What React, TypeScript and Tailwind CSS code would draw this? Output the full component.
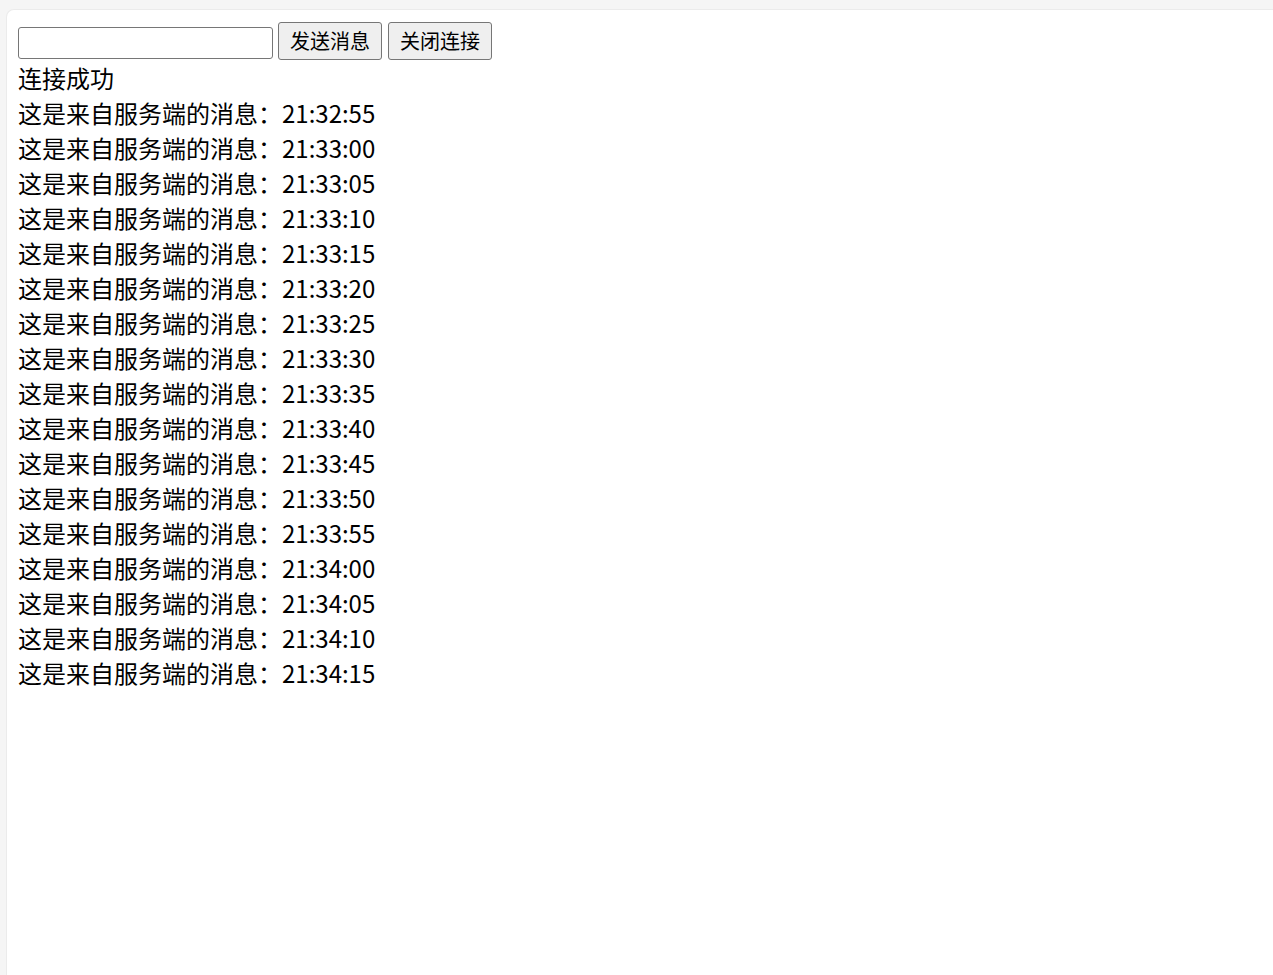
const times = [
  "21:32:55", "21:33:00", "21:33:05", "21:33:10", "21:33:15", "21:33:20",
  "21:33:25", "21:33:30", "21:33:35", "21:33:40", "21:33:45", "21:33:50",
  "21:33:55", "21:34:00", "21:34:05", "21:34:10", "21:34:15",
];

export default function App() {
  return (
    <div className="min-h-screen bg-[#f5f5f5] pl-[6px] pt-[9px] font-['Noto_Sans_CJK_SC',sans-serif] text-black">
      <div className="h-[966px] rounded-tl-[8px] bg-white border-l border-t border-[#ebebeb] py-[12px] pl-[11px] pr-[12px]">
        <div className="flex items-start">
          <input type="text" className="mt-[5px] h-[32px] w-[255px] rounded-[3px] border border-[#767676] bg-white px-1 outline-none" />
          <button className="ml-[5px] h-[38px] w-[104px] rounded-[3px] border border-[#767676] bg-[#efefef] text-[20px] leading-none">
            发送消息
          </button>
          <button className="ml-[6px] h-[38px] w-[104px] rounded-[3px] border border-[#767676] bg-[#efefef] text-[20px] leading-none">
            关闭连接
          </button>
        </div>
        <div className="text-[24px] leading-[35px]">
          <div>连接成功</div>
          {times.map((t) => (
            <div key={t}>这是来自服务端的消息：{t}</div>
          ))}
        </div>
      </div>
    </div>
  );
}
